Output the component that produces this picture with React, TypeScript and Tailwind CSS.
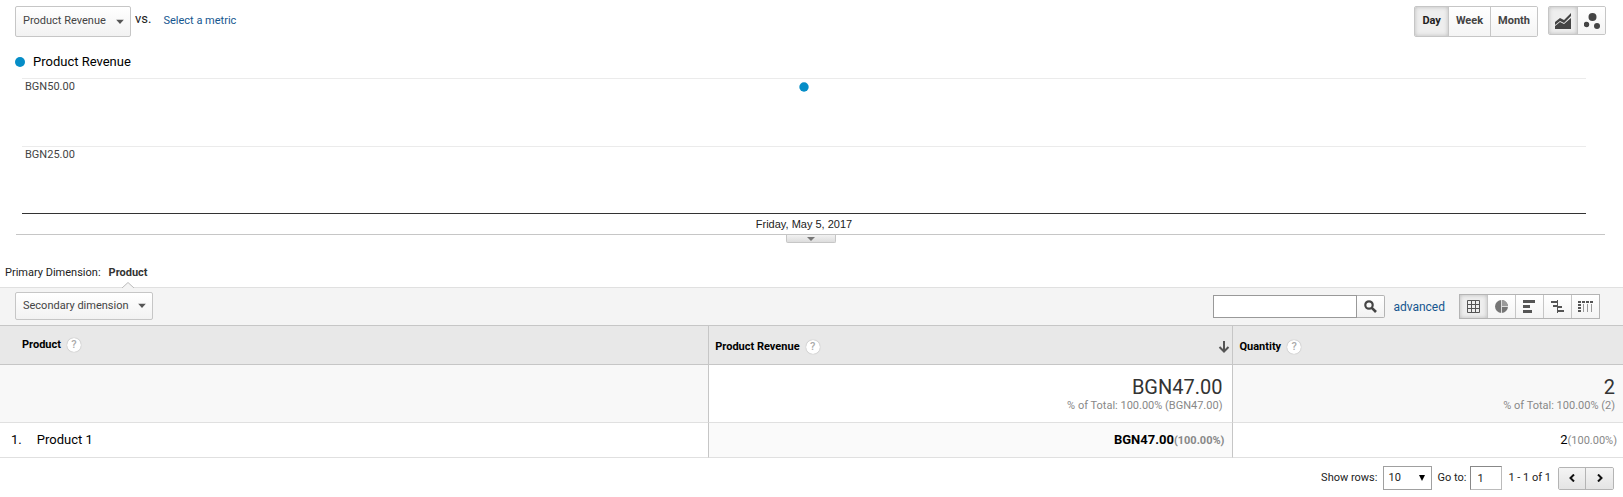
import type { ReactNode } from 'react';
import clsx from 'clsx';

const PERIODS = ['Day', 'Week', 'Month'];

function Caret({ className }: { className?: string }) {
  return (
    <svg className={clsx('pointer-events-none absolute', className)} width="8" height="5" viewBox="0 0 8 5" aria-hidden="true">
      <path d="M0 0h8L4 4.500z" fill="#555" />
    </svg>
  );
}

function DropDown({ label, value, className }: { label: string; value: string; className: string }) {
  return (
    <div className="relative">
      <select
        aria-label={label}
        className={clsx(
          'appearance-none rounded-[2px] border border-[#c6c6c6] bg-linear-to-b from-white to-[#f2f2f2] pl-[7px] text-[11px] text-[#444]',
          className,
        )}
      >
        <option>{value}</option>
      </select>
      <Caret className="right-[7px] top-1/2 -translate-y-1/2" />
    </div>
  );
}

function Help() {
  return (
    <button
      aria-label="Help"
      className="flex size-[14px] items-center justify-center rounded-full bg-white text-[11px] font-medium text-[#aaa] shadow-[0_0_1px_#888]"
    >
      ?
    </button>
  );
}

function IconButton({ label, active, className, children }: { label: string; active?: boolean; className: string; children: ReactNode }) {
  return (
    <button
      aria-label={label}
      aria-pressed={active}
      className={clsx(
        'flex items-center justify-center border-l border-[#c6c6c6] first:border-l-0',
        active ? 'bg-[#eee] shadow-[inset_0_0_4px_#bbb]' : 'bg-linear-to-b from-white to-[#f4f4f4]',
        className,
      )}
    >
      {children}
    </button>
  );
}

const VIEWS = [
  {
    label: 'Data table',
    icon: <path d="M.5.5h12v12H.5zM4.5 0v13M8.5 0v13M0 4.5h13M0 8.5h13" fill="none" stroke="#555" />,
  },
  {
    label: 'Percentage',
    icon: (
      <>
        <circle cx="6.5" cy="6.5" r="6.5" fill="#757575" />
        <path d="M7 0a6.5 6.5 0 0 1 6 6H7z" fill="#9b9b9b" />
        <path d="M6.500 0v13M6.500 6.500H13" stroke="#ddd" />
      </>
    ),
  },
  {
    label: 'Performance',
    icon: <path d="M0 0h12v3H0zM0 5h7v3H0zM0 10h9v3H0z" fill="#555" />,
  },
  {
    label: 'Comparison',
    icon: <path d="M0 1h6v2H0zM6 0h1v13H6zM2 5h4v2H2zM7 6h4v2H7zM7 10h6v2H7z" fill="#555" />,
  },
  {
    label: 'Pivot',
    icon: (
      <>
        <path d="M0 1h3v2H0zM4 1h3v2H4zM8 1h3v2H8zM12 1h3v2h-3zM0 4h3v2H0zM0 7h3v2H0zM0 10h3v2H0z" fill="#555" />
        <path d="M5.5 4v8M9.5 4v8M13.5 4v8" stroke="#999" />
      </>
    ),
  },
];

function Chart() {
  return (
    <section>
      <div className="flex items-start pl-[15px] pr-[17px] pt-[6px]">
        <DropDown label="Metric" value="Product Revenue" className="h-[31px] w-[116px]" />
        <span className="ml-1 mt-1 text-[13px] leading-[18px] text-[#222]">vs.</span>
        <a href="#metric" className="ml-3 mt-[6px] text-[11px] leading-[18px] text-[#15568f]">Select a metric</a>

        <div className="ml-auto flex h-[31px] overflow-hidden rounded-[2px] border border-[#c6c6c6] text-[11px] font-bold text-[#444]">
          {PERIODS.map((period, i) => (
            <button
              key={period}
              aria-pressed={i === 0}
              className={clsx(
                'border-l border-[#c6c6c6] px-[7px] first:border-l-0',
                i === 0 ? 'bg-[#eee] text-[#222] shadow-[inset_0_0_4px_#bbb]' : 'bg-linear-to-b from-white to-[#f4f4f4]',
              )}
            >
              {period}
            </button>
          ))}
        </div>
        <div className="ml-[10px] flex h-[29px] overflow-hidden rounded-[2px] border border-[#c6c6c6]">
          <IconButton label="Line chart" active className="w-7">
            <svg width="16" height="16" viewBox="0 0 16 16">
              <path d="M0 9l5-4 4 2 7-7v3L9 10 5 8l-5 4z" fill="#444" />
              <path d="M0 16v-3l5-4 4 2 7-6v11z" fill="#444" />
            </svg>
          </IconButton>
          <IconButton label="Motion chart" className="w-7">
            <svg width="16" height="16" viewBox="0 0 16 16" fill="#444">
              <circle cx="8.500" cy="4" r="4" />
              <circle cx="2.500" cy="11.500" r="2.700" />
              <circle cx="13" cy="13" r="3" />
            </svg>
          </IconButton>
        </div>
      </div>

      <div className="mt-[15px] flex items-center gap-[8px] pl-[15px] text-[13px] leading-5 text-black">
        <span className="size-[10px] rounded-full bg-[#058dc7]" />
        Product Revenue
      </div>

      <div className="relative ml-[22px] mr-[37px] mt-[6px] border-b border-[#333] text-[11px] leading-[16px] text-[#444]">
        <div className="h-[68px] border-t border-[#ebebeb] pl-[3px]">BGN50.00</div>
        <div className="h-[67px] border-t border-[#ebebeb] pl-[3px]">BGN25.00</div>
        <svg className="absolute left-1/2 top-1 -translate-x-1/2" width="10" height="10" viewBox="0 0 10 10">
          <circle cx="5" cy="5" r="4.7" fill="#058dc7" />
        </svg>
      </div>
      <p className="ml-[22px] mr-[37px] h-5 text-center font-['Liberation_Sans',Arial,sans-serif] text-[11px] leading-5 text-[#222]">
        Friday, May 5, 2017
      </p>
      <div className="ml-4 mr-[18px] flex justify-center border-t border-[#c6c6c6]">
        <button
          aria-label="Expand annotations"
          className="flex h-2 w-[50px] items-center justify-center rounded-b-[2px] border border-t-0 border-[#c6c6c6] bg-linear-to-b from-[#f2f2f2] to-[#ddd]"
        >
          <svg width="8" height="4" viewBox="0 0 8 4"><path d="M0 0h8L4 4z" fill="#777" /></svg>
        </button>
      </div>
    </section>
  );
}

function Toolbar() {
  return (
    <>
      <div className="mt-[22px] flex h-[22px] gap-2 pl-[5px] text-[11px] leading-4 text-[#222]">
        <span>Primary Dimension:</span>
        <span className="relative font-bold text-[#333]">
          Product
          <svg className="absolute left-1/2 top-[17px] -translate-x-1/2" width="12" height="6" viewBox="0 0 12 6">
            <path d="M0 6l6-5.5L12 6" fill="#f4f4f4" stroke="#bbb" />
          </svg>
        </span>
      </div>
      <div className="flex h-[38px] items-start border-t border-[#e0e0e0] bg-[#f4f4f4] pl-[15px] pr-[23px] pt-1">
        <DropDown label="Secondary dimension" value="Secondary dimension" className="h-7 w-[138px]" />
        <form className="ml-auto mt-[3px] flex h-[23px]" onSubmit={(e) => e.preventDefault()}>
          <input aria-label="Search" className="w-[144px] border border-[#999] bg-white px-1 text-[12px]" />
          <button aria-label="Search" className="flex w-7 items-center justify-center rounded-r-[2px] border border-l-0 border-[#b4b4b4] bg-linear-to-b from-white to-[#f2f2f2]">
            <svg width="13" height="13" viewBox="0 0 13 13" fill="none" stroke="#444">
              <circle cx="5" cy="5" r="3.7" strokeWidth="2.2" />
              <path d="M7.8 7.8l4.2 4.2" strokeWidth="2.6" />
            </svg>
          </button>
        </form>
        <a href="#advanced" className="ml-2 mt-[6px] text-[12px] leading-[18px] text-[#15568f]">advanced</a>
        <div className="ml-[14px] mt-[2px] flex h-[25px] border border-[#b4b4b4]">
          {VIEWS.map(({ label, icon }, i) => (
            <IconButton key={label} label={label} active={i === 0} className={i === 0 ? 'w-[27px]' : 'w-7'}>
              <svg width={label === 'Pivot' ? 15 : 13} height="13" viewBox={label === 'Pivot' ? '0 0 15 13' : '0 0 13 13'}>
                {icon}
              </svg>
            </IconButton>
          ))}
        </div>
      </div>
    </>
  );
}

function DataTable() {
  return (
    <table className="w-full table-fixed border-separate border-spacing-0">
      <thead className="bg-[#e8e8e8] text-[11px] text-black">
        <tr className="h-10">
          <th className="w-[43.7%] border-y border-r border-[#c6c6c6] p-0 pl-[22px]">
            <div className="flex items-center gap-[6px]">Product <Help /></div>
          </th>
          <th className="w-[32.3%] border-y border-r border-[#c6c6c6] px-[6px] pb-0 pt-1">
            <div className="flex items-center gap-[6px]">
              Product Revenue <Help />
              <button aria-label="Sort descending" className="-mr-1 ml-auto">
                <svg width="12" height="12" viewBox="0 0 12 12" fill="none" stroke="#555" strokeWidth="2">
                  <path d="M6 0v10M1.500 6L6 10.500 10.500 6" />
                </svg>
              </button>
            </div>
          </th>
          <th className="border-y border-[#c6c6c6] pb-0 pl-[6px] pt-1">
            <div className="flex items-center gap-[6px]">Quantity <Help /></div>
          </th>
        </tr>
      </thead>
      <tbody className="text-right">
        <tr className="h-[58px] text-[11px] leading-[14px] text-[#888]">
          <td className="border-b border-r border-b-[#e0e0e0] border-r-[#c6c6c6] bg-[#f8f8f8]" />
          <td className="border-b border-r border-b-[#e0e0e0] border-r-[#c6c6c6] px-[10px]">
            <div className="text-[20px] leading-6 text-[#333]">BGN47.00</div>
            % of Total: 100.00% (BGN47.00)
          </td>
          <td className="border-b border-[#e0e0e0] bg-[#f8f8f8] px-2">
            <div className="text-[20px] leading-6 text-[#333]">2</div>
            % of Total: 100.00% (2)
          </td>
        </tr>
        <tr className="h-[35px] text-[13px] text-black">
          <td className="border-b border-r border-b-[#e0e0e0] border-r-[#c6c6c6] pl-[11px] text-left">
            <span className="mr-[15px]">1.</span>Product 1
          </td>
          <td className="border-b border-r border-b-[#e0e0e0] border-r-[#c6c6c6] bg-[#fafafa] px-2 font-bold">
            BGN47.00<span className="text-[11px] text-[#888]">(100.00%)</span>
          </td>
          <td className="border-b border-[#e0e0e0] px-[6px]">
            2<span className="text-[11px] text-[#888]">(100.00%)</span>
          </td>
        </tr>
      </tbody>
    </table>
  );
}

function Pager() {
  return (
    <div className="flex items-center justify-end pb-2 pr-[9px] pt-2 text-[11px] text-[#222]">
      <label htmlFor="rows">Show rows:</label>
      <div className="relative ml-[6px]">
        <select id="rows" className="h-6 w-[49px] appearance-none border border-[#a0a0a0] bg-white pl-1 text-[11px]">
          <option>10</option>
        </select>
        <svg className="pointer-events-none absolute right-[7px] top-[9px]" width="6" height="6" viewBox="0 0 6 6">
          <path d="M0 0h6L3 6z" fill="#000" />
        </svg>
      </div>
      <label htmlFor="page" className="ml-[5px]">Go to:</label>
      <input id="page" defaultValue="1" className="ml-1 h-6 w-8 border border-[#bbb] border-l-[#888] border-t-[#888] bg-white pl-[6px] text-[11px]" />
      <span className="ml-[6px]">1 - 1 of 1</span>
      <div className="ml-[7px] flex h-[23px] overflow-hidden rounded-[2px] border border-[#b4b4b4]">
        <button aria-label="Previous page" className="flex w-[26px] items-center justify-center bg-linear-to-b from-[#f4f4f4] to-[#e4e4e4]">
          <svg width="6" height="8" viewBox="0 0 6 8" fill="none" stroke="#111" strokeWidth="2"><path d="M5 .5L1.500 4 5 7.500" /></svg>
        </button>
        <button aria-label="Next page" className="flex w-7 items-center justify-center border-l border-[#b4b4b4] bg-linear-to-b from-[#f4f4f4] to-[#e4e4e4]">
          <svg width="6" height="8" viewBox="0 0 6 8" fill="none" stroke="#111" strokeWidth="2"><path d="M1 .5L4.500 4 1 7.500" /></svg>
        </button>
      </div>
    </div>
  );
}

export default function App() {
  return (
    <main className="bg-white font-[Roboto,Arial,sans-serif]">
      <Chart />
      <Toolbar />
      <DataTable />
      <Pager />
    </main>
  );
}
